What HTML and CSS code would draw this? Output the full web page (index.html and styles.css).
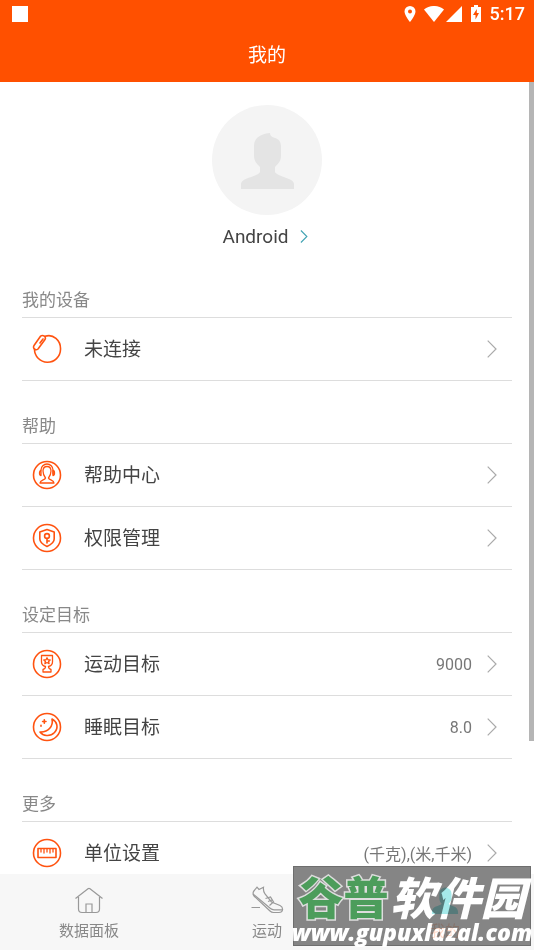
FILE: index.html
```html
<!DOCTYPE html>
<html lang="zh-CN">
<head>
<meta charset="utf-8">
<meta name="viewport" content="width=device-width, initial-scale=1">
<title>我的</title>
<link rel="stylesheet" href="styles.css">
</head>
<body>
<svg class="defs" aria-hidden="true">
  <symbol id="chevron" viewBox="0 0 10 18"><path d="M.7.7 9 9 .7 17.3"/></symbol>
</svg>
<header class="header">
  <div class="status">
    <span class="notice"></span>
    <div class="signals">
      <svg width="12" height="16" viewBox="0 0 12 16"><path fill="#fff" fill-rule="evenodd" d="M6 0a5.500 5.500 0 0 0-5.500 5.500C.5 9.500 6 16 6 16s5.500-6.500 5.500-10.500A5.500 5.500 0 0 0 6 0Zm0 3.500a2 2 0 1 1 0 4 2 2 0 0 1 0-4Z"/></svg>
      <svg class="wifi" width="20" height="16" viewBox="0 0 20 16"><path fill="#fff" d="M0 3.500C6-1.200 14-1.200 20 3.500L10 16Z"/></svg>
      <svg width="16" height="16" viewBox="0 0 16 16"><path fill="#fff" d="M16 0v16H0Z"/></svg>
      <svg class="battery" width="10" height="17" viewBox="0 0 10 17"><path fill="#fff" d="M3 0h4v2h3v15H0V2h3Z"/><path fill="#ff5000" d="M5.800 4 2 10h2.500v4.500L8 8H5.800Z"/></svg>
      <span class="time">5:17</span>
    </div>
  </div>
  <h1 class="title">我的</h1>
</header>
<main class="content">
  <a class="profile" href="#profile">
    <svg class="avatar" viewBox="0 0 110 110"><circle cx="55" cy="55" r="55" fill="#f4f4f4"/><path fill="#e4e4e4" d="M42 41c0-7 5-12 16-13 0 3 2 4 5 5 4 1 6 4 6 9v9c0 5-3 8-6 11v5c3 5 19 6 19 12v5H29v-5c0-6 16-7 19-12v-5c-3-3-6-6-6-11Z"/></svg>
    <span class="name">Android <svg class="chevron small"><use href="#chevron"/></svg></span>
  </a>
  <section>
    <h2>我的设备</h2>
    <a class="row" href="#device">
      <svg class="icon" viewBox="0 0 30 30"><path d="M13 2.300C21-.5 29 6 28.500 15.500A13 13 0 0 1 2.500 15"/><path d="M8.500 2.200 2 11.500c-1.500 3 1.500 5.500 4 3.500l7-9.500c1.500-3-2-5-4.500-3.300Z"/><path d="m8 9 3-4"/></svg>
      <span class="label">未连接</span>
      <svg class="chevron"><use href="#chevron"/></svg>
    </a>
  </section>
  <section>
    <h2>帮助</h2>
    <a class="row" href="#help">
      <svg class="icon" viewBox="0 0 30 30"><circle cx="15" cy="15" r="13.500"/><g class="fine"><path d="M9 10a6 6 0 0 1 12 0v4M11 11c0-6 8-6 8 0 0 3-1 5-2.500 7 .5 2 5.500 2 5.500 5H8c0-3 5-3 5.500-5C12 16 11 14 11 11Z"/><path d="M9 10.500c-2 0-2 5 0 5ZM21 10.500c2 0 2 5 0 5Z"/></g></svg>
      <span class="label">帮助中心</span>
      <svg class="chevron"><use href="#chevron"/></svg>
    </a>
    <a class="row" href="#permissions">
      <svg class="icon" viewBox="0 0 30 30"><circle cx="15" cy="15" r="13.500"/><path d="M15 6.500 22.200 9v7c0 4-4 6-7.200 7.500C11.800 22 7.800 20 7.800 16V9Z"/><circle cx="15" cy="13" r="2.400"/><path d="M15 15.500V20m0-2h2.300"/></svg>
      <span class="label">权限管理</span>
      <svg class="chevron"><use href="#chevron"/></svg>
    </a>
  </section>
  <section>
    <h2>设定目标</h2>
    <a class="row" href="#sport-goal">
      <svg class="icon" viewBox="0 0 30 30"><circle cx="15" cy="15" r="13.500"/><g class="fine"><path d="M9.500 6.500h11V13c0 3-2 4-4 4.500 0 2 .5 2.500 2.500 3V23h-8v-2.500c2-.5 2.500-1 2.500-3-2-.5-4-1.500-4-4.500Z"/><path d="m15 8.800 1 2 2.200.2-1.600 1.500.5 2.200-2.100-1.200-2.100 1.200.5-2.200-1.600-1.500 2.200-.2Z"/></g></svg>
      <span class="label">运动目标</span>
      <span class="value">9000</span>
      <svg class="chevron"><use href="#chevron"/></svg>
    </a>
    <a class="row" href="#sleep-goal">
      <svg class="icon" viewBox="0 0 30 30"><circle cx="15" cy="15" r="13.500"/><path d="M20 7c1.500 7-3.500 13.500-12 13 3 4 10 5 14.500.5C27 15.500 25 9.500 20 7Z"/><path d="M12.300 7.800v3.400m-1.700-1.700h3.400M9 13.200v1"/></svg>
      <span class="label">睡眠目标</span>
      <span class="value">8.0</span>
      <svg class="chevron"><use href="#chevron"/></svg>
    </a>
  </section>
  <section>
    <h2>更多</h2>
    <a class="row" href="#units">
      <svg class="icon" viewBox="0 0 30 30"><circle cx="15" cy="15" r="13.500"/><path d="M6 10.500h18v9H6Z"/><path class="fine" d="M9 11v3m3-3v4m3-4v3m3-3v4m3-4v3"/></svg>
      <span class="label">单位设置</span>
      <span class="value">(千克),(米,千米)</span>
      <svg class="chevron"><use href="#chevron"/></svg>
    </a>
  </section>
  <span class="scrollbar"></span>
</main>
<nav class="tabs">
  <a class="tab" href="#dashboard">
    <svg viewBox="0 0 34 28"><path d="M3.500 12.500 16 2.800q1-.8 2 0l12.500 9.700M6.500 11v12q0 3.500 3.500 3.500h14q3.500 0 3.500-3.500V11M14 26.500V18h6v8.500"/></svg>
    <span>数据面板</span>
  </a>
  <a class="tab" href="#sport">
    <svg viewBox="0 0 34 28"><path d="M3.500 5.500 7 1.200 9 3.500l4.500-2.300q-.5 4 1.500 6.800l6.500 8 8.500 3.500q3 1.500 2.500 4.500c-.3 2-1.500 2.500-3.500 2.500h-5.500q-2 0-3.500-1.500L4 10q-1.500-2-.5-4.500Z"/><path d="M3 8 20.500 22.500q1.500 1.300 3.500 1.300h8M15.500 12.500l5-1.500 3 5-4 3.500M18 15.500l4-1.500M1.500 21.500H10"/></svg>
    <span>运动</span>
  </a>
  <a class="tab current" href="#me">
    <svg viewBox="0 0 28 30"><path d="M8 8c0-4 3-6.500 7-6.500 4 1 6 3 6 7v5c0 3-2 4-3 5.500 2 3 10 2 10 9v2H0v-2c0-7 8-6 10.500-9C9 17.500 8 16 8 13Z"/></svg>
    <span>我的</span>
  </a>
</nav>
<aside class="watermark">
  <div class="brand"><span class="green">谷普</span><span class="white">软件园</span></div>
  <div class="site">www.gupuxlazal.com</div>
</aside>
</body>
</html>
```
FILE: styles.css
```css
* { box-sizing: border-box; }
body {
  margin: 0;
  height: 100vh;
  display: flex;
  flex-direction: column;
  position: relative;
  overflow: hidden;
  background: #fff;
  color: #444;
  font-family: Roboto, "Noto Sans CJK SC", sans-serif;
}
a { color: inherit; text-decoration: none; }
svg { flex: none; }
.defs { position: absolute; width: 0; height: 0; }

.header { flex: none; background: #ff5000; color: #fff; }
.status {
  height: 27px;
  padding: 0 9px 0 12px;
  display: flex;
  align-items: center;
  justify-content: space-between;
}
.notice { width: 16px; height: 16px; background: #fff; }
.signals { display: flex; align-items: center; }
.wifi { margin-left: 8px; margin-right: 2px; }
.battery { margin: 0 9px; }
.time { font-size: 18px; font-weight: 500; line-height: 27px; }
.title {
  margin: 0;
  height: 55px;
  font-size: 19px;
  font-weight: 400;
  line-height: 58px;
  text-align: center;
}

.content { flex: 1; min-height: 0; position: relative; overflow: hidden; padding: 23px 22px 0; }
.profile { display: flex; flex-direction: column; align-items: center; height: 150px; }
.avatar { width: 110px; height: 110px; }
.name { display: flex; align-items: center; gap: 11px; font-size: 19px; line-height: 43px; }
.chevron { width: 10px; height: 18px; fill: none; stroke: #aaa; stroke-width: 1.2; }
.chevron.small { width: 8px; height: 13px; stroke: #41a3b3; stroke-width: 1.5; }
.name .chevron { margin-right: 4px; }
h2 {
  margin: 0;
  height: 63px;
  padding-top: 31px;
  border-bottom: 1px solid #ddd;
  color: #888;
  font-size: 17px;
  font-weight: 400;
  line-height: 28px;
}
.row {
  height: 63px;
  padding: 0 15px 0 10px;
  display: flex;
  align-items: center;
  border-bottom: 1px solid #ddd;
}
.icon {
  width: 30px;
  height: 30px;
  fill: none;
  stroke: #ff5310;
  stroke-width: 1.6;
  stroke-linejoin: round;
  stroke-linecap: round;
}
.fine { stroke-width: 1.3; }
.label { flex: 1; margin-left: 22px; padding-bottom: 3px; font-size: 19px; }
.value { margin-right: 15px; color: #777; font-size: 16px; }
.scrollbar {
  position: absolute;
  top: 0;
  right: 0;
  width: 5px;
  height: 83.2%;
  background: #b5b5b5;
}

.tabs { flex: none; height: 76px; display: flex; background: #f7f7f7; color: #888; }
.tab {
  flex: 1;
  padding-top: 12px;
  display: flex;
  flex-direction: column;
  align-items: center;
  gap: 6px;
  font-size: 15px;
  line-height: 22px;
}
.tab svg { width: 34px; height: 28px; fill: none; stroke: #999; stroke-width: 1.2; }
.current { position: relative; z-index: 2; mix-blend-mode: multiply; }
.current svg { fill: #a5e9e9; stroke: none; }
.current span { color: #ff5000; opacity: 0.2; }

.watermark {
  position: absolute;
  right: 3px;
  bottom: 4px;
  z-index: 1;
  width: 238px;
  height: 80px;
  border: 1px solid #6e6e6e;
  background: #858585;
  color: #fff;
  white-space: nowrap;
}
.brand {
  display: flex;
  justify-content: center;
  gap: 2px;
  font-family: "Noto Sans CJK SC", sans-serif;
  font-size: 45px;
  font-weight: 900;
  line-height: 58px;
  height: 53px;
}
.green { color: #4c9d5b; -webkit-text-stroke: 3px #ddd; paint-order: stroke fill; }
.white { font-style: italic; }
.site {
  display: flex;
  justify-content: center;
  font-family: "Open Sans", sans-serif;
  font-size: 23px;
  font-style: italic;
  font-weight: 800;
  line-height: 24px;
}
```
